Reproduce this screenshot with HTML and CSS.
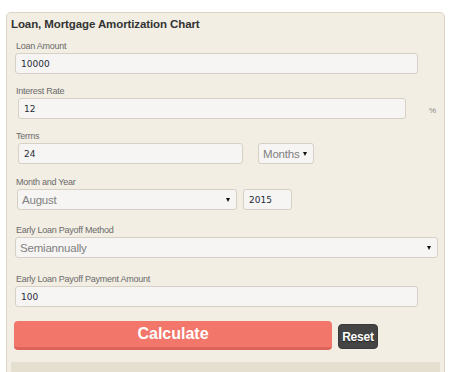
FILE: index.html
```html
<!DOCTYPE html>
<html lang="en">

<head>
    <meta charset="utf-8">
    <meta name="viewport" content="width=device-width, initial-scale=1.0">
    <title>Loan, Mortgage Amortization Chart</title>
    <link rel="stylesheet" href="styles.css">
</head>

<body>
    <section class="panel">
        <h1 class="title">Loan, Mortgage Amortization Chart</h1>

        <div class="field f-loan">
            <label>Loan Amount</label>
            <input class="txt loan" type="text" value="10000">
        </div>

        <div class="field f-rate">
            <label>Interest Rate</label>
            <div class="row">
                <input class="txt rate" type="text" value="12">
                <span class="unit">%</span>
            </div>
        </div>

        <div class="field f-terms">
            <label>Terms</label>
            <div class="row">
                <input class="txt terms" type="text" value="24">
                <div class="sel months">
                    <select>
                        <option>Months</option>
                        <option>Years</option>
                    </select>
                </div>
            </div>
        </div>

        <div class="field f-month">
            <label>Month and Year</label>
            <div class="row">
                <div class="sel month">
                    <select>
                        <option>August</option>
                    </select>
                </div>
                <input class="txt year" type="text" value="2015">
            </div>
        </div>

        <div class="field f-method">
            <label>Early Loan Payoff Method</label>
            <div class="sel method">
                <select>
                    <option>Semiannually</option>
                </select>
            </div>
        </div>

        <div class="field f-pay">
            <label>Early Loan Payoff Payment Amount</label>
            <input class="txt pay" type="text" value="100">
        </div>

        <div class="knapper">
            <button class="calc">Calculate</button>
            <button class="reset">Reset</button>
        </div>

        <div class="result"></div>
    </section>
</body></html>
```

FILE: styles.css
```css
body {
    margin: 0;
    background: #fff;
    font-family: "Liberation Sans", Arial, sans-serif;
}

.panel {
    box-sizing: border-box;
    width: 439px;
    height: 420px;
    margin: 12px 0 0 6px;
    padding: 4px 0 0 4px;
    background: #f2eee3;
    border: 1px solid #dcd5c3;
    border-radius: 5px;
}

.title {
    margin: 0;
    font-size: 11.5px;
    line-height: 14px;
    font-weight: bold;
    letter-spacing: -0.1px;
    color: #333;
}

.field label {
    display: block;
    height: 12px;
    margin: 0 0 1px 5px;
    font-size: 9px;
    line-height: 12px;
    letter-spacing: -0.25px;
    color: #6b6b6b;
}

.f-loan { margin-top: 9px; }
.f-rate { margin-top: 11px; }
.f-terms { margin-top: 11px; }
.f-month { margin-top: 12px; }
.f-method { margin-top: 14px; }
.f-pay { margin-top: 15px; }

.row {
    display: flex;
    align-items: center;
}

.txt {
    box-sizing: border-box;
    display: block;
    height: 21px;
    padding: 0 5px;
    background: #f6f5f3;
    border: 1px solid #d6d1c6;
    border-radius: 3px;
    font-family: "DejaVu Sans", Verdana, sans-serif;
    font-size: 9px;
    color: #262b3a;
}

.loan { width: 403px; margin-left: 4px; }
.rate { width: 388px; margin-left: 7px; }
.terms { width: 225px; margin-left: 7px; }
.year { width: 49px; margin-left: 6px; }
.pay { width: 403px; margin-left: 4px; }

.unit {
    margin: 3px 0 0 23px;
    font-size: 8px;
    color: #888;
}

.sel {
    position: relative;
    box-sizing: border-box;
    height: 21px;
}

.sel select {
    box-sizing: border-box;
    width: 100%;
    height: 100%;
    padding: 0 0 0 4px;
    appearance: none;
    -webkit-appearance: none;
    background: #f6f5f3;
    border: 1px solid #d6d1c6;
    border-radius: 3px;
    font-family: "Liberation Sans", Arial, sans-serif;
    font-size: 11.5px;
    letter-spacing: -0.2px;
    color: #808080;
}

.sel::after {
    content: "";
    position: absolute;
    right: 7px;
    top: 9px;
    border-left: 2px solid transparent;
    border-right: 2px solid transparent;
    border-top: 4px solid #111;
}

.months { width: 56px; margin-left: 15px; }
.month { width: 220px; margin-left: 6px; }
.method { width: 423px; margin-left: 4px; }

.knapper {
    display: flex;
    align-items: flex-end;
    margin: 14px 0 0 3px;
}

.calc {
    box-sizing: border-box;
    width: 318px;
    height: 29px;
    padding: 0;
    background: #f27669;
    border: none;
    border-bottom: 3px solid #dc6459;
    border-radius: 4px;
    font-family: "Liberation Sans", Arial, sans-serif;
    font-size: 16px;
    font-weight: bold;
    color: #fff;
}

.reset {
    box-sizing: border-box;
    width: 40px;
    height: 25px;
    margin: 0 0 1px 6px;
    padding: 0;
    background: #444;
    border: 1px solid #3a3a3a;
    border-radius: 4px;
    font-family: "Liberation Sans", Arial, sans-serif;
    font-size: 12px;
    font-weight: bold;
    letter-spacing: -0.2px;
    color: #fff;
    text-shadow: 0 1px 1px #222;
}

.result {
    width: 429px;
    height: 40px;
    margin-top: 12px;
    background: #e5dfcf;
}
```
